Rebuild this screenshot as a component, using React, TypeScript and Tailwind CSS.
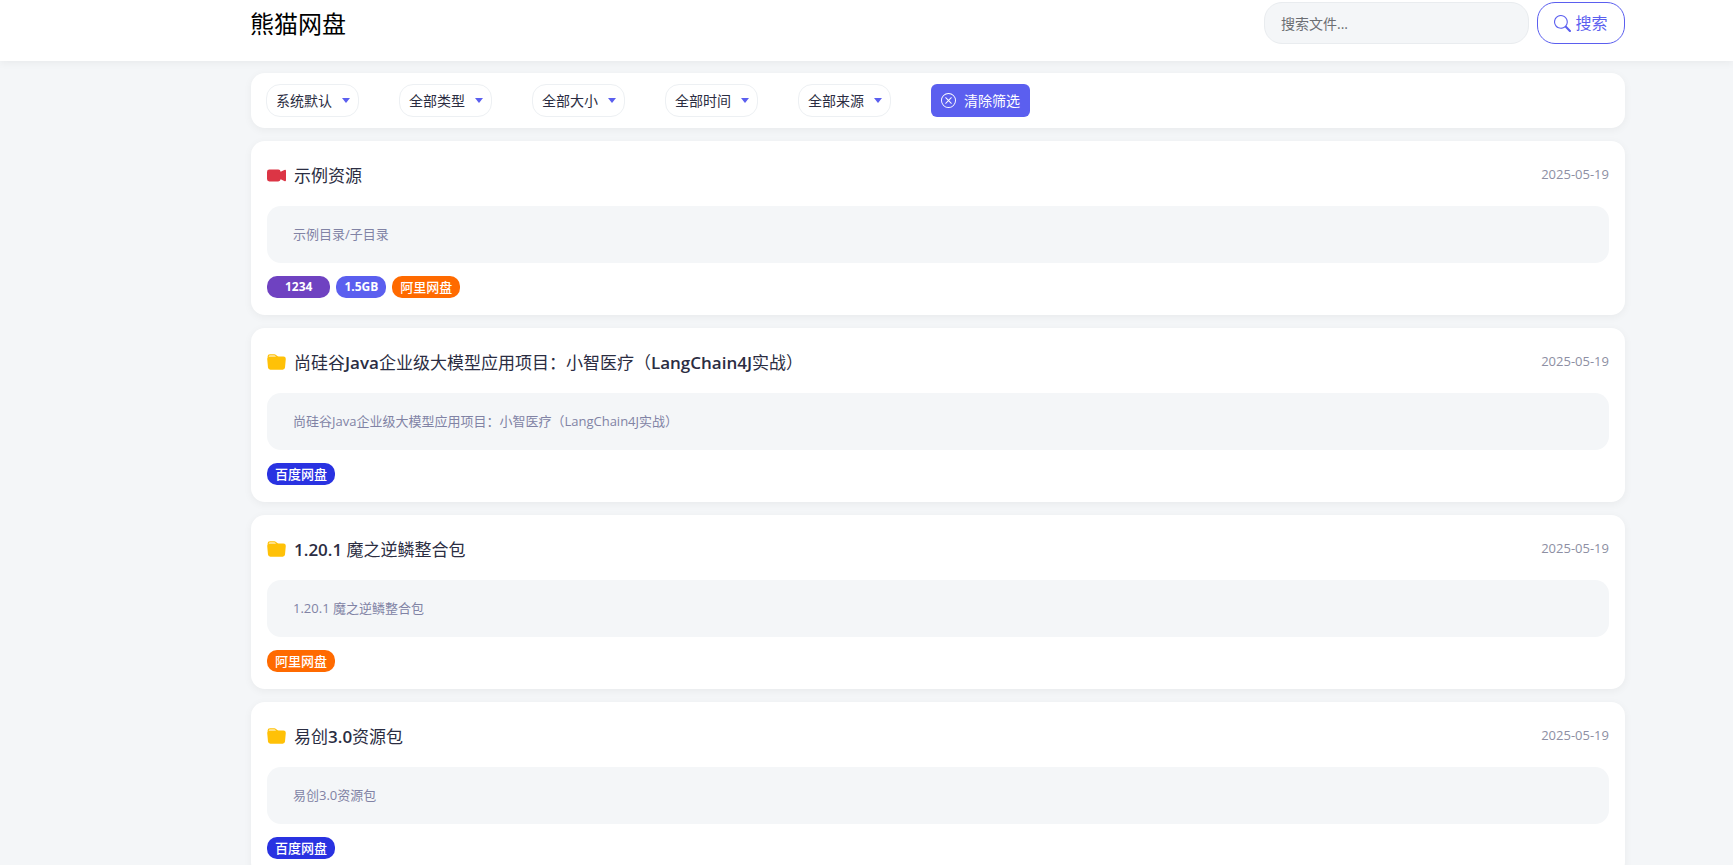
import { useState } from 'react';
import { BsCameraVideoFill, BsFolderFill, BsSearch, BsXCircle } from 'react-icons/bs';

type FileKind = 'video' | 'folder';
type TagKind = 'code' | 'size' | 'aliyun' | 'baidu';

interface Resource {
  id: number;
  kind: FileKind;
  title: string;
  path: string;
  date: string;
  tags: { kind: TagKind; label: string }[];
}

const filters = [
  { name: 'sort', label: '排序', options: ['系统默认', '最新时间', '文件大小'] },
  { name: 'type', label: '类型', options: ['全部类型', '视频', '文件夹'] },
  { name: 'size', label: '大小', options: ['全部大小', '1GB以下', '1GB以上'] },
  { name: 'time', label: '时间', options: ['全部时间', '最近一周', '最近一月'] },
  { name: 'source', label: '来源', options: ['全部来源', '阿里网盘', '百度网盘'] },
];

const resources: Resource[] = [
  {
    id: 1,
    kind: 'video',
    title: '示例资源',
    path: '示例目录/子目录',
    date: '2025-05-19',
    tags: [
      { kind: 'code', label: '1234' },
      { kind: 'size', label: '1.5GB' },
      { kind: 'aliyun', label: '阿里网盘' },
    ],
  },
  {
    id: 2,
    kind: 'folder',
    title: '尚硅谷Java企业级大模型应用项目：小智医疗（LangChain4J实战）',
    path: '尚硅谷Java企业级大模型应用项目：小智医疗（LangChain4J实战）',
    date: '2025-05-19',
    tags: [{ kind: 'baidu', label: '百度网盘' }],
  },
  {
    id: 3,
    kind: 'folder',
    title: '1.20.1 魔之逆鳞整合包',
    path: '1.20.1 魔之逆鳞整合包',
    date: '2025-05-19',
    tags: [{ kind: 'aliyun', label: '阿里网盘' }],
  },
  {
    id: 4,
    kind: 'folder',
    title: '易创3.0资源包',
    path: '易创3.0资源包',
    date: '2025-05-19',
    tags: [{ kind: 'baidu', label: '百度网盘' }],
  },
];

const emptyFilters = Object.fromEntries(filters.map((f) => [f.name, f.options[0]]));

const tagStyles: Record<TagKind, string> = {
  code: 'bg-[#6f42c1] px-[18px] text-[12px] font-bold',
  size: 'bg-[#5b5fef] px-2 text-[12px] font-bold',
  aliyun: 'bg-[#ff6a00] px-2 text-[13px] font-medium',
  baidu: 'bg-[#2932e1] px-2 text-[13px] font-medium',
};

// Latin runs are set semibold, Chinese stays regular
function MixedTitle({ text }: { text: string }) {
  return (
    <>
      {text.split(/([\w.]+)/).map((part, i) =>
        i % 2 === 1 ? (
          <span key={i} className="font-semibold">
            {part}
          </span>
        ) : (
          part
        ),
      )}
    </>
  );
}

function ResourceCard({ resource }: { resource: Resource }) {
  return (
    <article className="rounded-[14px] bg-white px-4 pt-[21px] pb-[17px] shadow-[0_2px_8px_rgba(0,0,0,0.05)]">
      <div className="flex items-start justify-between">
        <h2 className="flex items-center gap-2 text-[17px] leading-[27px] text-[#2b2d42]">
          {resource.kind === 'video' ? (
            <BsCameraVideoFill className="size-[19px] shrink-0 text-[#dc3545]" />
          ) : (
            <BsFolderFill className="size-[19px] shrink-0 text-[#ffc107]" />
          )}
          <span>
            <MixedTitle text={resource.title} />
          </span>
        </h2>
        <time className="text-[13px] leading-[25px] text-[#8d8fa3]">{resource.date}</time>
      </div>
      <p className="mt-[17px] rounded-[14px] bg-[#f4f6f8] px-[26px] py-[18px] text-[13px] leading-[21px] text-[#8183a5]">
        {resource.path}
      </p>
      <div className="mt-[13px] flex gap-[6px]">
        {resource.tags.map((tag) => (
          <span
            key={tag.label}
            className={`rounded-[10px] leading-[22px] text-white ${tagStyles[tag.kind]}`}
          >
            {tag.label}
          </span>
        ))}
      </div>
    </article>
  );
}

export default function App() {
  const [values, setValues] = useState<Record<string, string>>(emptyFilters);
  const [query, setQuery] = useState('');

  return (
    <div className="min-h-screen bg-[#f4f6f8] font-['Open_Sans','Noto_Sans_CJK_SC',sans-serif] text-[#2b2d42]">
      <header className="bg-white pt-[2px] pr-[108px] pb-[17px] pl-[250px] shadow-[0_2px_8px_rgba(0,0,0,0.05)]">
        <div className="flex items-center justify-between">
          <a href="#" className="pt-[2px] text-2xl text-black">
            熊猫网盘
          </a>
          <form className="flex gap-2" onSubmit={(e) => e.preventDefault()}>
            <input
              type="search"
              aria-label="搜索文件"
              placeholder="搜索文件..."
              value={query}
              onChange={(e) => setQuery(e.target.value)}
              className="h-[42px] w-[265px] rounded-[18px] border border-[#e9ecef] bg-[#f4f6f8] px-4 text-[14px] outline-none placeholder:text-[#6c6e73]"
            />
            <button
              type="submit"
              className="flex h-[42px] w-[88px] items-center justify-center gap-1 rounded-[18px] border border-[#5b5fef] text-base text-[#5b5fef]"
            >
              <BsSearch className="size-[17px]" />
              搜索
            </button>
          </form>
        </div>
      </header>

      <main className="flex flex-col gap-[13px] pt-3 pr-[108px] pb-6 pl-[251px]">
        <div className="flex gap-10 rounded-[14px] bg-white px-[15px] py-[11px] shadow-[0_2px_8px_rgba(0,0,0,0.05)]">
          {filters.map((filter) => (
            <div key={filter.name} className="relative">
              <select
                aria-label={filter.label}
                value={values[filter.name]}
                onChange={(e) => setValues({ ...values, [filter.name]: e.target.value })}
                className="h-[33px] w-[93px] appearance-none rounded-[14px] border border-[#edf0f3] bg-white pl-[9px] text-[14px] outline-none"
              >
                {filter.options.map((option) => (
                  <option key={option}>{option}</option>
                ))}
              </select>
              <svg
                viewBox="0 0 8 5"
                className="pointer-events-none absolute top-[14px] right-[9px] h-[5px] w-2 fill-[#5b5fef]"
              >
                <path d="M0 0h8L4 5z" />
              </svg>
            </div>
          ))}
          <button
            type="button"
            onClick={() => setValues(emptyFilters)}
            className="flex h-[33px] items-center gap-2 rounded-md bg-[#5b5fef] px-[10px] text-[14px] text-white"
          >
            <BsXCircle className="size-[15px]" />
            清除筛选
          </button>
        </div>

        {resources.map((resource) => (
          <ResourceCard key={resource.id} resource={resource} />
        ))}
      </main>
    </div>
  );
}
